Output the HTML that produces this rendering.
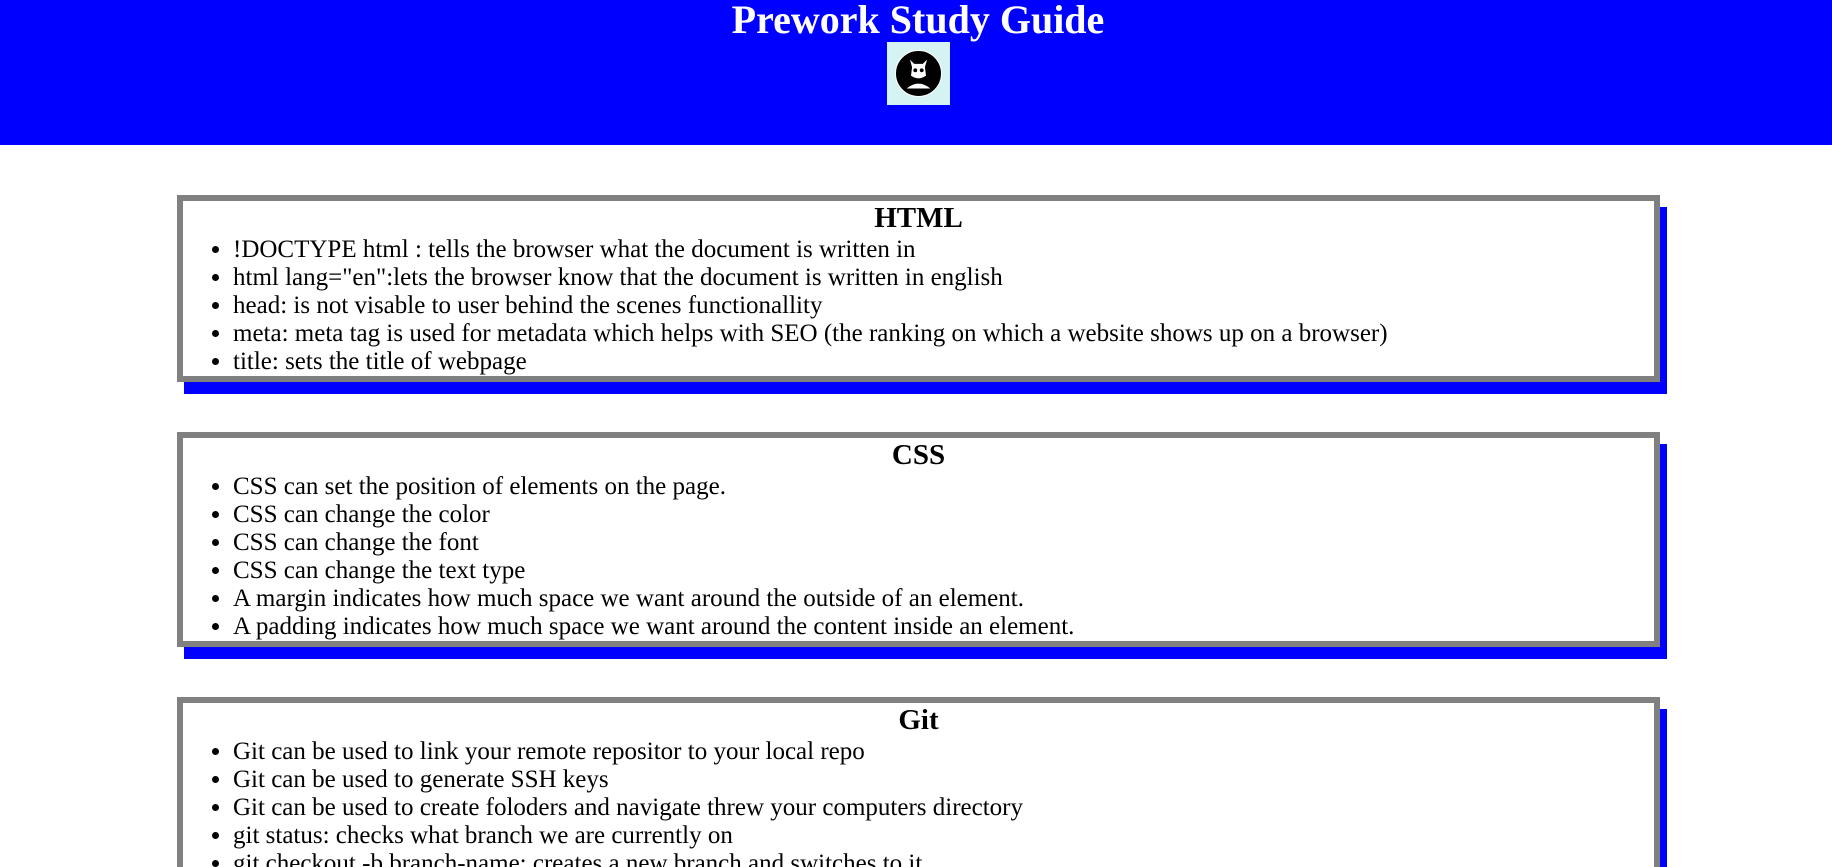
<!DOCTYPE html>
<html><head><style>
html,body{margin:0;padding:0;background:#fff;overflow:hidden;height:867px;}
body{width:1832px;font-family:"Liberation Serif",serif;}
header{background:#0000ff;height:145px;text-align:center;color:#fff;}
h1{margin:0;font-size:40px;line-height:40px;font-weight:bold;padding-left:4px;}
.logo{display:inline-block;width:63px;height:63px;background:#d6f3f3;margin-top:2px;margin-left:4px;position:relative;}
.logo .c{position:absolute;left:8px;top:8px;width:47px;height:47px;border-radius:50%;background:#000;border:1px solid #fff;box-sizing:border-box;}
.box{margin:50px 172px 0 177px;border:6px solid #808080;box-shadow:7px 12px 0 #0000ff;background:#fff;}
h2{margin:0;text-align:center;font-size:29px;line-height:35px;}
ul{margin:0;padding-left:50px;font-size:25px;line-height:28px;}
.wrap{height:722px;overflow:hidden;}
</style></head><body>
<header><h1>Prework Study Guide</h1>
<span class="logo"><span class="c"><svg width="45" height="45" viewBox="0 0 42 42" style="position:absolute;left:0;top:0"><path d="M13 8 L15 15 L14 23 Q21 28 28 23 L27 15 L29 8 L25 12 L17 12 Z" fill="#fff"/><circle cx="18" cy="18" r="1.8" fill="#000"/><circle cx="24" cy="18" r="1.8" fill="#000"/><path d="M10 35 Q21 26 32 35 Z" fill="#fff"/></svg></span></span></header>
<div class="wrap">
<div class="box"><h2>HTML</h2><ul>
<li>!DOCTYPE html : tells the browser what the document is written in</li>
<li>html lang="en":lets the browser know that the document is written in english</li>
<li>head: is not visable to user behind the scenes functionallity</li>
<li>meta: meta tag is used for metadata which helps with SEO (the ranking on which a website shows up on a browser)</li>
<li>title: sets the title of webpage</li></ul></div>
<div class="box"><h2>CSS</h2><ul>
<li>CSS can set the position of elements on the page.</li>
<li>CSS can change the color</li>
<li>CSS can change the font</li>
<li>CSS can change the text type</li>
<li>A margin indicates how much space we want around the outside of an element.</li>
<li>A padding indicates how much space we want around the content inside an element.</li></ul></div>
<div class="box"><h2>Git</h2><ul>
<li>Git can be used to link your remote repositor to your local repo</li>
<li>Git can be used to generate SSH keys</li>
<li>Git can be used to create foloders and navigate threw your computers directory</li>
<li>git status: checks what branch we are currently on</li>
<li>git checkout -b branch-name: creates a new branch and switches to it</li>
<li>git add: adds changes</li></ul></div>
</div>
</body></html>
